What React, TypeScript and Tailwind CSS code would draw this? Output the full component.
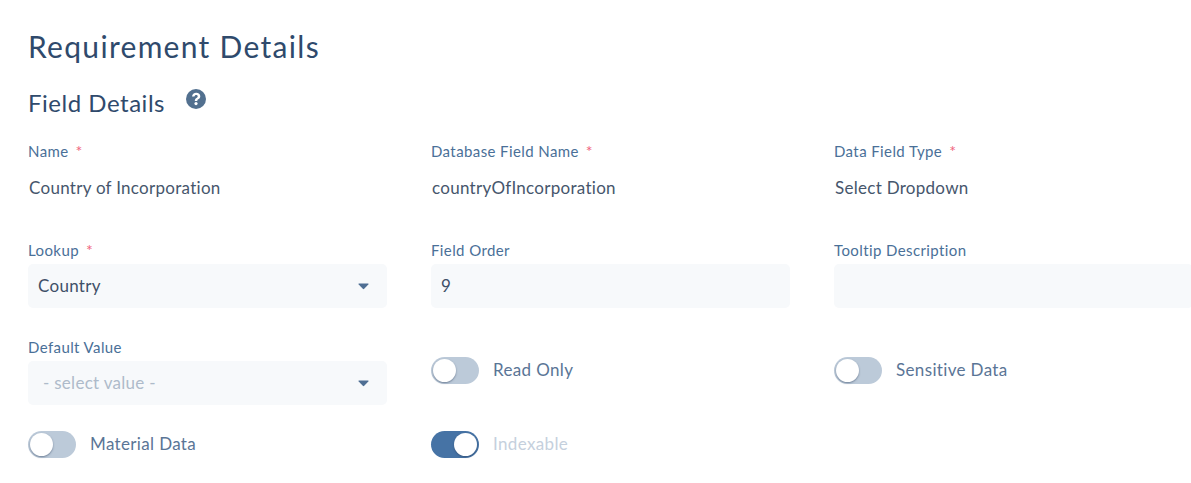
import React from 'react';

const body = "font-['Lato','Noto_Sans',sans-serif]";

const Caret = () => (
  <svg width="11" height="7" viewBox="0 0 11 7" className="shrink-0">
    <path d="M1 0.6 H10 Q11 0.6 10.3 1.5 L6.2 5.8 Q5.5 6.5 4.8 5.8 L0.7 1.5 Q0 0.6 1 0.6 Z" fill="#4f6f94" />
  </svg>
);

const Label = ({ text, required }: { text: string; required?: boolean }) => (
  <div className="h-[22px] flex items-center gap-[7px] text-[15px] tracking-[0.4px] text-[#4a7098]">
    <span>{text}</span>
    {required && <span className="text-[16px] text-[#f0647c]">*</span>}
  </div>
);

const Toggle = ({ label, on, muted }: { label: string; on?: boolean; muted?: boolean }) => (
  <div className="flex items-center gap-[14px]">
    <div className={`w-[48px] h-[27px] rounded-full flex items-center p-[2px] ${on ? 'justify-end bg-[#4673a5]' : 'justify-start bg-[#bccad9]'}`}>
      <div className="w-[23px] h-[23px] rounded-full bg-white shadow-[0_1px_2px_rgba(40,60,90,0.5)]" />
    </div>
    <span className={`-mt-px text-[17px] tracking-[0.35px] ${muted ? 'text-[#c5d0dd]' : 'text-[#5a7596]'}`}>{label}</span>
  </div>
);

const PlainValue = ({ label, value }: { label: string; value: string }) => (
  <div>
    <Label text={label} required />
    <div className="mt-[3px] h-[46px] flex items-center pl-px text-[17px] tracking-[0.28px] text-[#46566c]">{value}</div>
  </div>
);

const Field = ({ label, required, children }: { label: string; required?: boolean; children?: React.ReactNode }) => (
  <div>
    <Label text={label} required={required} />
    <div className="mt-[3px] h-[44px] rounded-[5px] bg-[#f7f9fb] flex items-center justify-between pl-[10px] pr-[18px] text-[17px] tracking-[0.28px] text-[#3f5068]">
      {children}
    </div>
  </div>
);

const rowClass = 'grid grid-cols-[359px_359px_359px] gap-x-[44px]';

export default function App() {
  return (
    <div className={`w-[1191px] h-[483px] overflow-hidden bg-white pl-[28px] ${body}`}>
      <h1 className="pt-[26px] h-[68px] text-[30px] leading-[40px] tracking-[1.3px] text-[#2f4a6c]">Requirement Details</h1>
      <div className="h-[72px] flex items-start">
        <h2 className="mt-[19px] text-[24px] leading-[32px] tracking-[0.52px] text-[#2f4a6c]">Field Details</h2>
        <svg width="20" height="20" viewBox="0 0 20 20" className="ml-[21px] mt-[21px]">
          <circle cx="10" cy="10" r="10" fill="#52708f" />
          <path d="M6 7.5 C6.2 5 8 3.7 10.2 3.7 C12.6 3.7 14.3 5.1 14.3 7.2 C14.3 8.8 13.4 9.6 12.3 10.3 C11.5 10.8 11.3 11.1 11.3 12.1 H8.8 C8.8 10.4 9.3 9.6 10.4 8.9 C11.2 8.4 11.7 8.1 11.7 7.4 C11.7 6.6 11 6.1 10.1 6.1 C9.2 6.1 8.6 6.7 8.4 7.6 Z" fill="#fff" />
          <circle cx="10" cy="14.6" r="1.6" fill="#fff" />
        </svg>
      </div>
      <div className={rowClass}>
        <PlainValue label="Name" value="Country of Incorporation" />
        <PlainValue label="Database Field Name" value="countryOfIncorporation" />
        <PlainValue label="Data Field Type" value="Select Dropdown" />
      </div>
      <div className={`${rowClass} mt-[28px]`}>
        <Field label="Lookup" required>
          <span>Country</span>
          <Caret />
        </Field>
        <Field label="Field Order">
          <span>9</span>
        </Field>
        <Field label="Tooltip Description" />
      </div>
      <div className={`${rowClass} mt-[28px]`}>
        <Field label="Default Value">
          <span className="pl-[5px] text-[#aebbca]">- select value -</span>
          <Caret />
        </Field>
        <div className="pt-[21px]">
          <Toggle label="Read Only" />
        </div>
        <div className="pt-[21px]">
          <Toggle label="Sensitive Data" />
        </div>
      </div>
      <div className={`${rowClass} mt-[26px]`}>
        <Toggle label="Material Data" />
        <Toggle label="Indexable" on muted />
      </div>
    </div>
  );
}
